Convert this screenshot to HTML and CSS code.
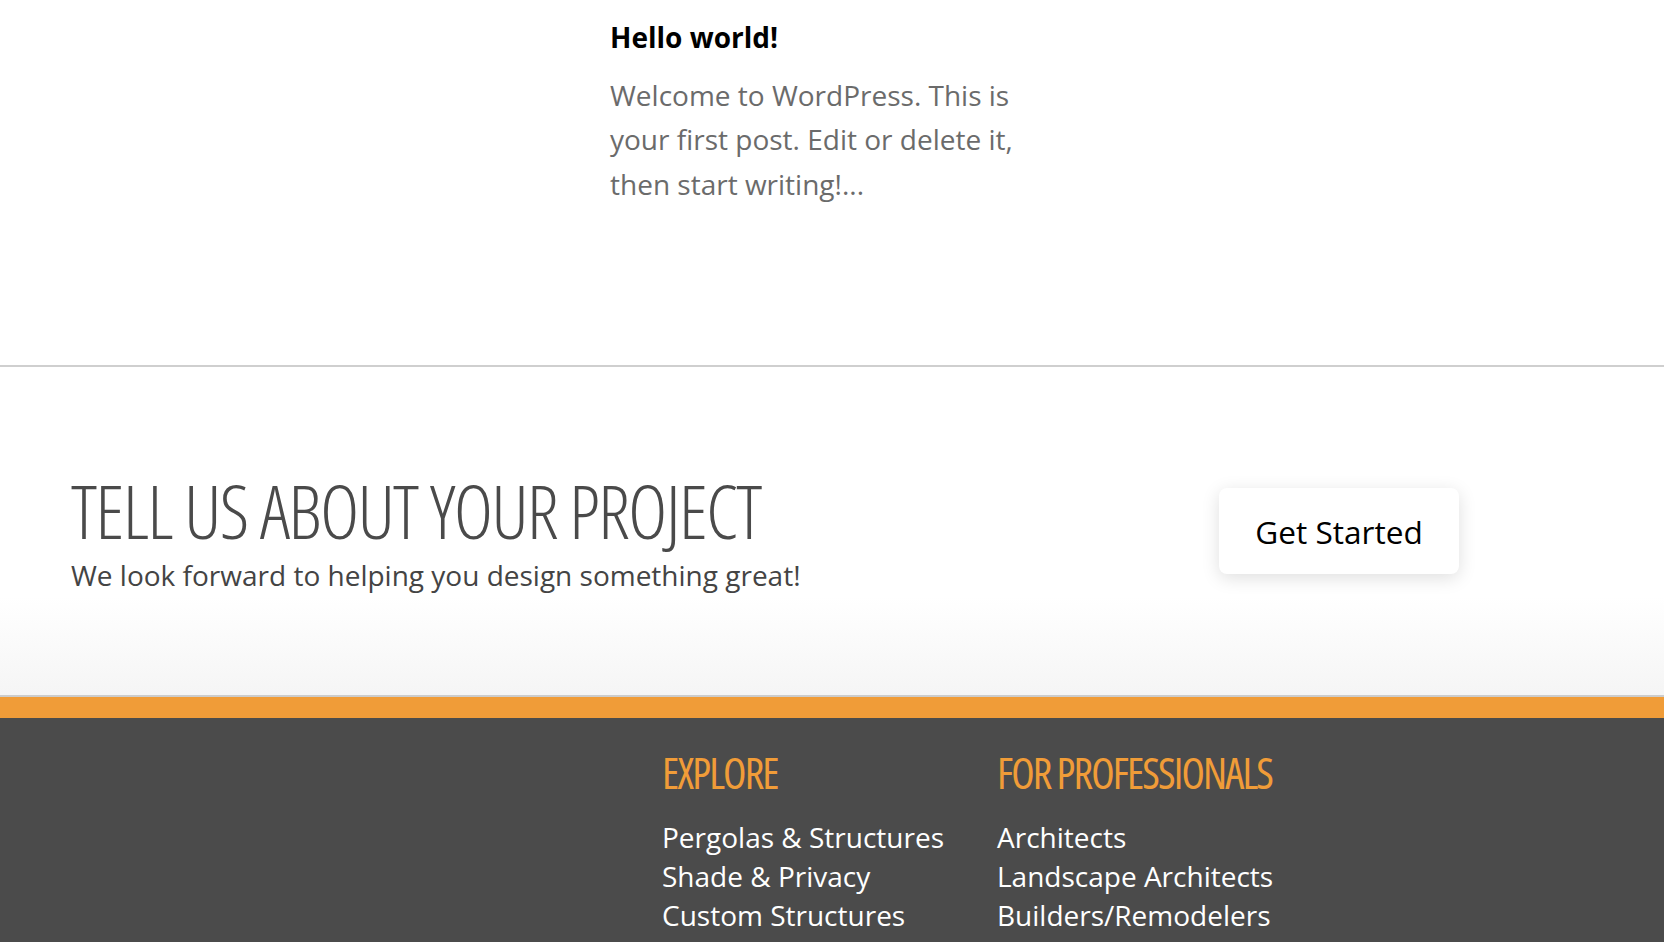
FILE: index.html
```html
<!DOCTYPE html>
<html lang="en">
<head>
<meta charset="utf-8">
<title>Blog</title>
<link rel="stylesheet" href="styles.css">
</head>
<body>
<section class="posts">
  <article class="post">
    <h2 class="post-title">Hello world!</h2>
    <p class="post-excerpt">Welcome to WordPress. This is your first post. Edit or delete it, then start writing!...</p>
  </article>
</section>
<section class="cta">
  <div class="cta-text">
    <h2 class="cta-title">TELL US ABOUT YOUR PROJECT</h2>
    <p class="cta-sub">We look forward to helping you design something great!</p>
  </div>
  <a class="cta-button" href="#">Get Started</a>
</section>
<footer class="footer">
  <div class="footer-cols">
    <div class="footer-col">
      <h3 class="footer-heading">EXPLORE</h3>
      <ul class="footer-links">
        <li><a href="#">Pergolas &amp; Structures</a></li>
        <li><a href="#">Shade &amp; Privacy</a></li>
        <li><a href="#">Custom Structures</a></li>
      </ul>
    </div>
    <div class="footer-col">
      <h3 class="footer-heading">FOR PROFESSIONALS</h3>
      <ul class="footer-links">
        <li><a href="#">Architects</a></li>
        <li><a href="#">Landscape Architects</a></li>
        <li><a href="#">Builders/Remodelers</a></li>
      </ul>
    </div>
  </div>
</footer>
</body>
</html>
```

FILE: styles.css
```css
* { box-sizing: border-box; }
html, body { margin: 0; padding: 0; }
body {
  font-family: "Open Sans", "Liberation Sans", sans-serif;
  background: #fff;
  color: #444;
  overflow: hidden;
}
h2, h3, p, ul { margin: 0; padding: 0; }
a { text-decoration: none; color: inherit; }

.posts {
  height: 367px;
  border-bottom: 2px solid #cfcfcf;
  padding-left: 610px;
  display: flex;
}
.post { width: 420px; }
.post-title {
  margin-top: 21px;
  font-size: 28px;
  line-height: 33.6px;
  font-weight: 700;
  color: #000;
}
.post-excerpt {
  margin-top: 18px;
  font-size: 28px;
  line-height: 44.6px;
  color: #6b6b6b;
}

.cta {
  height: 330px;
  border-bottom: 2px solid #cccccc;
  background: linear-gradient(to bottom, #ffffff 0%, #ffffff 70%, #f5f5f5 100%);
  display: flex;
  align-items: center;
  justify-content: space-between;
  padding: 0 205px 0 71px;
}
.cta-text { margin-top: 4px; }
.cta-title {
  font-family: "Open Sans", sans-serif;
  font-stretch: 75%;
  font-weight: 300;
  font-size: 74px;
  line-height: 76px;
  letter-spacing: -1.5px;
  color: #4a4a4a;
}
.cta-sub {
  margin-top: 10px;
  font-size: 28px;
  line-height: 33.6px;
  color: #444;
}
.cta-button {
  display: flex;
  align-items: center;
  justify-content: center;
  width: 240px;
  height: 86px;
  background: #fff;
  border-radius: 8px;
  box-shadow: 0 4px 18px rgba(0, 0, 0, 0.13);
  font-size: 31.6px;
  color: #000;
}

.footer {
  border-top: 21px solid #f09c38;
  background: #4b4b4b;
  height: 260px;
  padding: 33px 0 0 662px;
}
.footer-cols {
  display: grid;
  grid-template-columns: 335px auto;
}
.footer-heading {
  font-family: "Open Sans", sans-serif;
  font-stretch: 75%;
  font-weight: 500;
  font-size: 43px;
  line-height: 43px;
  letter-spacing: -1.9px;
  color: #f09c38;
}
.footer-links {
  list-style: none;
  margin-top: 24px;
}
.footer-links li {
  font-size: 28px;
  line-height: 39px;
  color: #fff;
}
```
